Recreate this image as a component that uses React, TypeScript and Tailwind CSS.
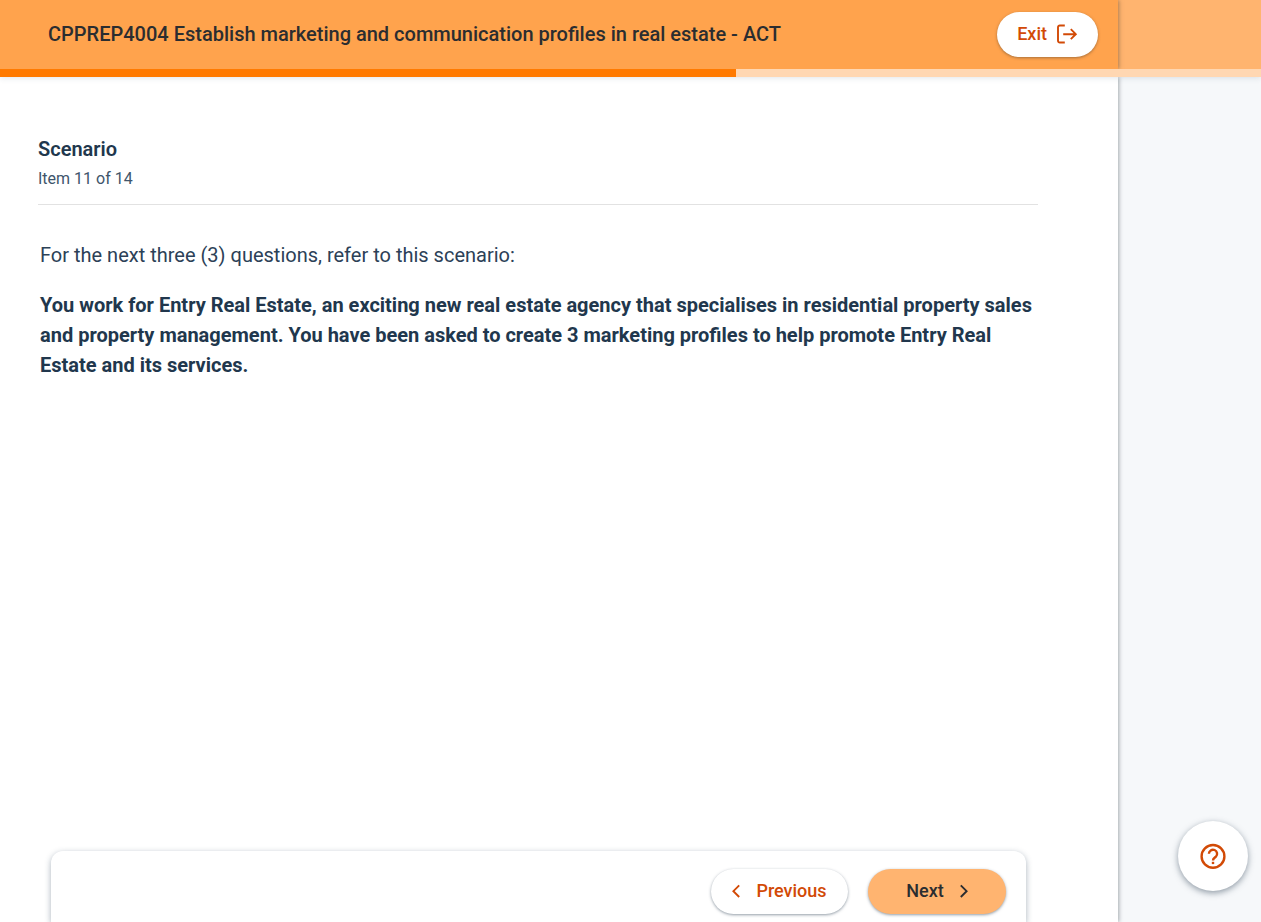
const ExitIcon = () => (
  <svg width="21" height="20" viewBox="0 0 21 20" fill="none" stroke="currentColor" strokeWidth="1.9" aria-hidden="true">
    <path d="M7.8 1.5H2.8A1.8 1.8 0 0 0 1 3.3v13.4a1.8 1.8 0 0 0 1.8 1.8h5" />
    <path d="M6.2 10.2h13M13.8 5.2l5 5-5 5" />
  </svg>
);

const Chevron = ({ direction }: { direction: "left" | "right" }) => (
  <svg width="8" height="14" viewBox="0 0 8 14" fill="none" stroke="currentColor" strokeWidth="1.9" aria-hidden="true">
    <path d={direction === "left" ? "M7.2 1.4 1.4 7.2 7.2 13" : "M.8 1.4 6.6 7.2.8 13"} />
  </svg>
);

const HelpIcon = () => (
  <svg width="26" height="26" viewBox="0 0 26 26" fill="none" stroke="currentColor" strokeWidth="2.4" aria-hidden="true">
    <circle cx="13" cy="13.4" r="11.4" />
    <path d="M8.9 10.8a4.1 4.1 0 1 1 7 2.9C14.3 15.1 13 15.6 13 17.4" />
    <path d="M13 18.8v2.3" />
  </svg>
);

const TOTAL_STEPS = 12;
const STEPS_DONE = 7;

const Header = () => (
  <header className="relative z-10 shadow-[0_1px_6px_rgba(40,70,100,0.14)]">
    <div className="flex h-[69px] overflow-hidden bg-[#ffb46f]">
      <div className="flex flex-1 items-center justify-between bg-[#ffa34d] pr-5 pl-12 shadow-[1px_0_4px_rgba(90,70,50,0.5)]">
        <h1 className="pb-[2px] text-xl font-medium text-[#2b2d30]">
          CPPREP4004 Establish marketing and communication profiles in real estate - ACT
        </h1>
        <button
          type="button"
          className="flex h-[45px] items-center gap-[10px] rounded-full bg-white px-5 pb-px text-lg font-medium text-[#d24a06] shadow-[0_1px_3px_rgba(80,60,40,0.5)]"
        >
          Exit
          <ExitIcon />
        </button>
      </div>
      <div className="w-[143px]" />
    </div>
    <div
      className="h-2 bg-[#ffd7b2]"
      role="progressbar"
      aria-label="Progress"
      aria-valuemin={0}
      aria-valuemax={TOTAL_STEPS}
      aria-valuenow={STEPS_DONE}
    >
      <div className="h-full bg-[#ff7a00]" style={{ width: `${(STEPS_DONE / TOTAL_STEPS) * 100}%` }} />
    </div>
  </header>
);

const Scenario = () => (
  <section className="pt-[57px] pr-20 pl-[38px] text-[#21374d]">
    <div className="border-b border-[#e2e2e2] pb-[10px]">
      <h2 className="text-xl leading-[30px] font-semibold">Scenario</h2>
      <p className="text-base leading-[30px] text-[#40556b]">Item 11 of 14</p>
    </div>
    <div className="mt-[35px] space-y-5 px-[2px] text-xl leading-[30px]">
      <p className="text-[#2c4157]">For the next three (3) questions, refer to this scenario:</p>
      <p className="font-bold">
        You work for Entry Real Estate, an exciting new real estate agency that specialises in residential property
        sales and property management. You have been asked to create 3 marketing profiles to help promote Entry Real
        Estate and its services.
      </p>
    </div>
  </section>
);

const Navigation = () => (
  <nav className="mt-auto mr-[92px] ml-[51px] flex justify-end gap-5 rounded-t-xl bg-white px-5 pt-[18px] pb-2 shadow-[0_2px_6px_rgba(40,65,90,0.4)]">
    <button
      type="button"
      className="flex h-[45px] w-[137px] items-center justify-center gap-4 rounded-full bg-white pb-px text-lg font-medium text-[#d24a06] shadow-[0_1px_3px_rgba(40,60,80,0.5)]"
    >
      <Chevron direction="left" />
      Previous
    </button>
    <button
      type="button"
      className="flex h-[45px] w-[138px] items-center justify-center gap-4 rounded-full bg-[#ffb470] pb-px text-lg font-medium text-[#2b2d30] shadow-[0_1px_3px_rgba(40,60,80,0.5)]"
    >
      Next
      <Chevron direction="right" />
    </button>
  </nav>
);

const App = () => {
  return (
    <div className="flex min-h-screen flex-col bg-[#f6f8fa] font-[Roboto,sans-serif]">
      <Header />
      <div className="flex flex-1">
        <main className="flex flex-1 flex-col bg-white shadow-[1px_0_4px_rgba(60,70,80,0.45)]">
          <Scenario />
          <Navigation />
        </main>
        <aside className="w-[143px]" />
      </div>
      <button
        type="button"
        aria-label="Help"
        className="fixed right-[13px] bottom-[31px] z-20 flex size-[70px] items-center justify-center rounded-full bg-white text-[#d24a06] shadow-[0_2px_6px_rgba(40,60,80,0.5)]"
      >
        <HelpIcon />
      </button>
    </div>
  );
};

export default App;
